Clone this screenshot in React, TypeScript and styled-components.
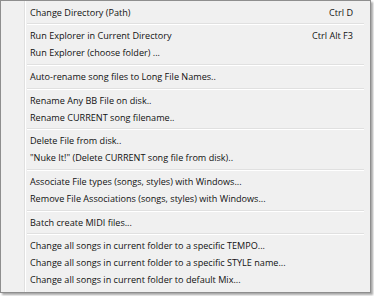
import styled, { createGlobalStyle } from "styled-components";

type Entry = { label: string; shortcut?: string } | "sep";

const entries: Entry[] = [
  { label: "Change Directory (Path)", shortcut: "Ctrl D" },
  "sep",
  { label: "Run Explorer in Current Directory", shortcut: "Ctrl Alt F3" },
  { label: "Run Explorer (choose folder) ..." },
  "sep",
  { label: "Auto-rename song files to Long File Names.." },
  "sep",
  { label: "Rename Any BB File on disk.." },
  { label: "Rename CURRENT song filename.." },
  "sep",
  { label: "Delete File from disk.." },
  { label: "\"Nuke It!\" (Delete CURRENT song file from disk).." },
  "sep",
  { label: "Associate File types (songs, styles) with Windows..." },
  { label: "Remove File Associations (songs, styles) with Windows..." },
  "sep",
  { label: "Batch create MIDI files..." },
  "sep",
  { label: "Change all songs in current folder to a specific TEMPO..." },
  { label: "Change all songs in current folder to a specific STYLE name..." },
  { label: "Change all songs in current folder to default Mix..." },
];

const GlobalStyle = createGlobalStyle`
  html, body {
    margin: 0;
    padding: 0;
    background: #ffffff;
  }
  body {
    width: 374px;
    height: 296px;
    overflow: hidden;
  }
`;

const App = () => (
  <>
    <GlobalStyle />
    <Menu>
      <Gutter />
      <List>
        {entries.map((e, i) =>
          e === "sep" ? (
            <Separator key={i} />
          ) : (
            <Item key={i}>
              <Label>{e.label}</Label>
              {e.shortcut && <Shortcut>{e.shortcut}</Shortcut>}
            </Item>
          )
        )}
      </List>
    </Menu>
  </>
);

const Menu = styled.div`
  box-sizing: border-box;
  display: flex;
  width: 371px;
  height: 293px;
  background: #f0f0f0;
  border: 1px solid #8e8e8e;
  box-shadow: 2px 2px 2px rgba(0, 0, 0, 0.35);
  font-family: "Open Sans", "Noto Sans", sans-serif;
  font-size: 9.1px;
  color: #111111;
`;

const Gutter = styled.div`
  width: 23px;
  border-right: 1px solid #e0e0e0;
  box-shadow: 1px 0 0 #ffffff;
  flex-shrink: 0;
`;

const List = styled.div`
  flex: 1;
  display: flex;
  flex-direction: column;
  padding: 2.5px 16px 0 2px;
`;

const Item = styled.div`
  height: 17px;
  display: flex;
  align-items: center;
  justify-content: space-between;
  padding-left: 3px;
  white-space: nowrap;
`;

const Label = styled.span``;

const Shortcut = styled.span`
  padding-right: 1px;
`;

const Separator = styled.div`
  height: 1px;
  margin: 2.7px -10px 2px 0;
  background: #e0e0e0;
  border-bottom: 1px solid #ffffff;
`;

export default App;
